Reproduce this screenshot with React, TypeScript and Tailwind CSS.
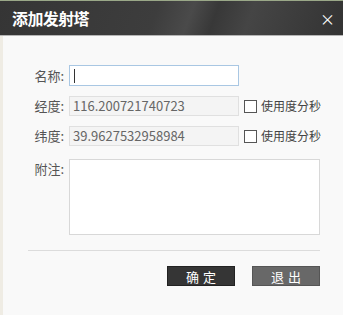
const font = { fontFamily: '"Noto Sans CJK SC", "Noto Sans", sans-serif' }

const CheckLabel = () => (
    <label className="flex items-center gap-[4px] text-[12px] text-[#444] leading-none whitespace-nowrap">
        <span className="w-[13px] h-[13px] border border-[#555] bg-white shrink-0"></span>
        <span>使用度分秒</span>
    </label>
)

const App = () => {
    return (
        <div style={font} className="w-[343px] h-[315px] flex flex-col bg-[#f9f9f9] overflow-hidden">
            <div className="h-[1px] bg-[#9aa888]"></div>
            <div className="relative h-[34px] flex items-center justify-between pl-[12px] pr-[8px] bg-[linear-gradient(110deg,#353535_0%,#3d3d3d_45%,#4a4a4a_55%,#383838_62%,#454545_72%,#333333_100%)]">
                <span className="text-white font-bold text-[16px] tracking-[-0.6px]">添加发射塔</span>
                <span className="text-white text-[15px] leading-none">×</span>
            </div>
            <div className="h-[1px] bg-[#b5b5b5]"></div>
            <div className="flex-1 flex border-l-[3px] border-[#efece4]">
                <div className="flex flex-col pt-[29px]">
                    <div className="grid grid-cols-[61px_170px_76px] gap-x-[5px] items-center">
                        <span className="text-right text-[13px] text-[#555]">名称:</span>
                        <div className="h-[21px] bg-white border border-[#a9c7e3] flex items-center pl-[4px]">
                            <span className="w-[1px] h-[14px] bg-[#333]"></span>
                        </div>
                        <span></span>

                        <span className="mt-[10px] text-right text-[13px] text-[#555]">经度:</span>
                        <div className="mt-[10px] h-[20px] bg-[#f4f4f4] border border-[#e0e0e0] flex items-center pl-[3px] text-[13px] text-[#666]">116.200721740723</div>
                        <div className="mt-[10px]"><CheckLabel /></div>

                        <span className="mt-[10px] text-right text-[13px] text-[#555]">纬度:</span>
                        <div className="mt-[10px] h-[20px] bg-[#f4f4f4] border border-[#e0e0e0] flex items-center pl-[3px] text-[13px] text-[#666]">39.9627532958984</div>
                        <div className="mt-[10px]"><CheckLabel /></div>

                        <span className="mt-[13px] self-start text-right text-[13px] text-[#555]">附注:</span>
                        <div className="mt-[13px] col-span-2 h-[76px] bg-white border border-[#d8d8d8]"></div>
                    </div>
                    <div className="ml-[25px] mt-[15px] h-[1px] bg-[#dcdcdc]"></div>
                    <div className="flex justify-end gap-[17px] mt-[15px]">
                        <button className="w-[68px] h-[20px] bg-[#353535] border border-[#222] text-white text-[13px] leading-none tracking-[4px] pl-[4px]">确定</button>
                        <button className="w-[68px] h-[20px] bg-[#686868] border border-[#555] text-white text-[13px] leading-none tracking-[4px] pl-[4px]">退出</button>
                    </div>
                </div>
            </div>
        </div>
    )
}

export default App
